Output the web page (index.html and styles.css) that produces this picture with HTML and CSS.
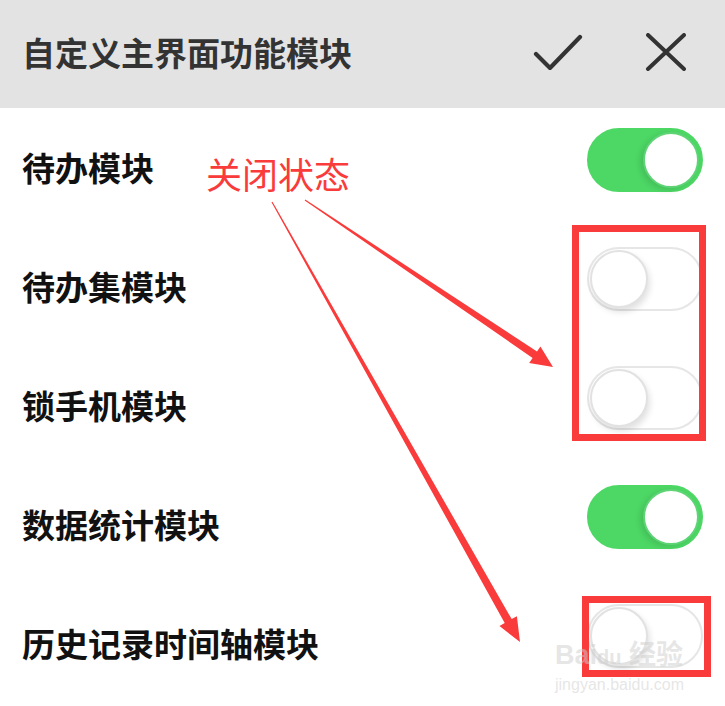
FILE: index.html
```html
<!DOCTYPE html>
<html lang="zh-CN">
<head>
    <meta charset="UTF-8">
    <meta name="viewport" content="width=device-width, initial-scale=1.0">
    <title>自定义主界面功能模块</title>
    <link rel="stylesheet" href="styles.css">
</head>
<body>
    <div class="screen">
        <!-- Header -->
        <div class="header">
            <h1 class="title">自定义主界面功能模块</h1>
            <div class="actions">
                <svg class="icon" width="50" height="36" viewBox="0 0 50 36">
                    <path d="M3 20 L17 34 L47 3" fill="none" stroke="#333" stroke-width="4.2" stroke-linecap="round" stroke-linejoin="round"/>
                </svg>
                <svg class="icon" width="42" height="38" viewBox="0 0 42 38">
                    <path d="M3 2 L39 36 M39 2 L3 36" fill="none" stroke="#333" stroke-width="4" stroke-linecap="round"/>
                </svg>
            </div>
        </div>

        <!-- Module list -->
        <div class="module-list">
            <div class="module-row">
                <span class="module-name">待办模块</span>
                <span class="switch on"><span class="knob"></span></span>
            </div>
            <div class="module-row">
                <span class="module-name">待办集模块</span>
                <span class="switch"><span class="knob"></span></span>
            </div>
            <div class="module-row">
                <span class="module-name">锁手机模块</span>
                <span class="switch"><span class="knob"></span></span>
            </div>
            <div class="module-row">
                <span class="module-name">数据统计模块</span>
                <span class="switch on"><span class="knob"></span></span>
            </div>
            <div class="module-row">
                <span class="module-name">历史记录时间轴模块</span>
                <span class="switch"><span class="knob"></span></span>
            </div>
        </div>

        <!-- Annotation layer -->
        <div class="note-label">关闭状态</div>
        <div class="note-box box-one"></div>
        <div class="note-box box-two"></div>
        <svg class="note-arrows" width="725" height="706" viewBox="0 0 725 706">
            <polygon fill="#fa3b3b" points="305.3,199.6 537.0,351.4 540.4,346.4 553,367 529.2,363.0 532.6,358.0 304.7,200.4"/>
            <polygon fill="#fa3b3b" points="272.5,201.7 511.7,619.1 516.9,616.2 520,642 499.5,626.0 504.7,623.1 271.5,202.3"/>
        </svg>

        <div class="watermark">
            <div class="wm-logo">Bai<span class="wm-du">du</span> 经验</div>
            <div class="wm-url">jingyan.baidu.com</div>
        </div>
    </div>
</body>
</html>
```

FILE: styles.css
```css
body {
    margin: 0;
    padding: 0;
    background: #fff;
    font-family: "Noto Sans CJK SC", "Noto Sans", sans-serif;
}
.screen {
    position: relative;
    width: 725px;
    height: 706px;
    overflow: hidden;
    background: #fff;
}
.header {
    display: flex;
    align-items: center;
    height: 108px;
    padding: 0 38px 4px 22px;
    box-sizing: border-box;
    background: #e3e3e3;
}
.title {
    flex: 1;
    margin: 0;
    font-size: 33px;
    font-weight: 700;
    color: #333;
    letter-spacing: 0;
}
.actions {
    display: flex;
    align-items: center;
    gap: 62px;
}
.icon {
    display: block;
}
.module-list {
    padding-top: 4px;
}
.module-row {
    display: flex;
    align-items: center;
    justify-content: space-between;
    height: 119px;
    padding: 0 22px;
}
.module-name {
    margin-bottom: 9px;
    font-size: 33px;
    font-weight: 700;
    color: #111;
}
.switch {
    position: relative;
    width: 116px;
    height: 64px;
    margin-bottom: 24px;
    border-radius: 32px;
    box-sizing: border-box;
    border: 2px solid #e6e6e6;
    background: #fff;
}
.switch .knob {
    position: absolute;
    top: 1px;
    left: 1px;
    width: 58px;
    height: 58px;
    border-radius: 50%;
    box-sizing: border-box;
    background: #fff;
    border: 2px solid #e2e2e2;
    box-shadow: 2px 4px 6px rgba(0, 0, 0, 0.12);
}
.switch.on {
    border-color: #4dd865;
    background: #4dd865;
}
.switch.on .knob {
    left: auto;
    right: 2px;
    top: 2px;
    width: 56px;
    height: 56px;
    border-color: #5fd476;
    box-shadow: -3px 2px 6px rgba(0, 0, 0, 0.12);
}
.note-label {
    position: absolute;
    left: 206px;
    top: 153px;
    font-size: 36px;
    line-height: 40px;
    color: #fa3b3b;
}
.note-box {
    position: absolute;
    border: 7px solid #fa3b3b;
}
.box-one {
    left: 572px;
    top: 225px;
    width: 120px;
    height: 202px;
}
.box-two {
    left: 582px;
    top: 596px;
    width: 115px;
    height: 67px;
}
.note-arrows {
    position: absolute;
    left: 0;
    top: 0;
}
.watermark {
    position: absolute;
    left: 555px;
    top: 640px;
    color: rgba(205, 205, 205, 0.5);
    font-family: "Liberation Sans", "Noto Sans CJK SC", sans-serif;
}
.wm-logo {
    font-size: 27px;
    font-weight: 700;
    line-height: 30px;
}
.wm-du {
    font-size: 20px;
}
.wm-url {
    font-size: 16px;
    line-height: 18px;
    margin-top: 4px;
}
```
